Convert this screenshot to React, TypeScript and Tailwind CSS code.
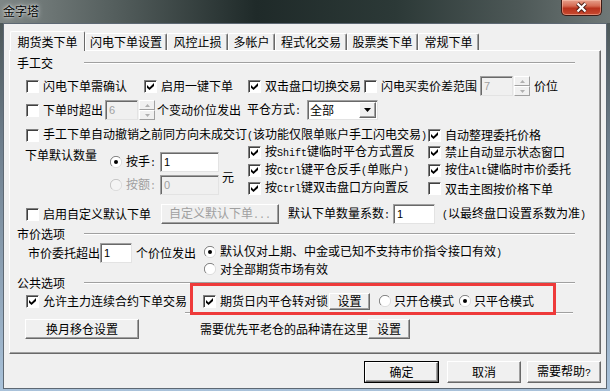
import React from 'react';

const mono = "font-['Liberation_Mono',monospace] text-[10px]";

// ASCII runs use a 6px-wide mono face, like the SimSun dialog font
function Txt({ t, className = '' }: { t: string; className?: string }) {
  const parts = t.split(/([\x20-\x7e]+)/).filter(Boolean);
  return (
    <span className={`whitespace-pre ${className}`}>
      {parts.map((p, i) =>
        /^[\x20-\x7e]+$/.test(p) ? (
          <span key={i} className={mono}>
            {p}
          </span>
        ) : (
          <span key={i}>{p}</span>
        )
      )}
    </span>
  );
}

function Check({ on = false }: { on?: boolean }) {
  return (
    <span className="relative inline-flex h-[13px] w-[13px] shrink-0 border border-b-white border-l-[#808080] border-r-white border-t-[#808080] bg-white shadow-[inset_1px_1px_0_#404040]">
      {on && (
        <svg className="absolute left-[2px] top-[2px]" width="7" height="7" viewBox="0 0 7 7">
          <path d="M0 2 L2.5 4.4 L7 0 L7 3 L2.5 7 L0 4.8 Z" fill="#000" />
        </svg>
      )}
    </span>
  );
}

function Radio({ on = false, dis = false }: { on?: boolean; dis?: boolean }) {
  return (
    <svg width="12" height="12" viewBox="0 0 12 12" className="shrink-0">
      <circle cx="6" cy="6" r="5.5" fill={dis ? '#f4f4f4' : '#fff'} />
      <path d="M10 2A5.6 5.6 0 0 0 2 10" fill="none" stroke={dis ? '#c4c4c4' : '#808080'} />
      <path d="M2 10A5.6 5.6 0 0 0 10 2" fill="none" stroke="#dcdcdc" />
      {on && <circle cx="6" cy="6" r="2" fill={dis ? '#a0a0a0' : '#000'} />}
    </svg>
  );
}

function Field({ className = '', v, dis = false }: { className?: string; v: string; dis?: boolean }) {
  return (
    <span
      className={`flex shrink-0 items-center border border-b-[#e3e3e3] border-l-[#a0a0a0] border-r-[#e3e3e3] border-t-[#a0a0a0] pl-[3px] font-['Liberation_Sans',sans-serif] text-[11px] shadow-[inset_1px_1px_0_#696969] ${
        dis ? 'bg-[#f0f0f0] text-[#a0a0a0]' : 'bg-white text-black'
      } ${className}`}
    >
      {v}
    </span>
  );
}

function Spin() {
  return (
    <span className="flex h-[20px] w-[16px] shrink-0 flex-col">
      <span className="flex h-[10px] items-center justify-center border border-b-[#a0a0a0] border-l-white border-r-[#a0a0a0] border-t-white bg-[#f0f0f0]">
        <svg width="5" height="3" viewBox="0 0 5 3">
          <path d="M2.5 0L5 3H0Z" fill="#b0b0b0" />
        </svg>
      </span>
      <span className="flex h-[10px] items-center justify-center border border-b-[#a0a0a0] border-l-white border-r-[#a0a0a0] border-t-white bg-[#f0f0f0]">
        <svg width="5" height="3" viewBox="0 0 5 3">
          <path d="M0 0H5L2.5 3Z" fill="#b0b0b0" />
        </svg>
      </span>
    </span>
  );
}

function Btn({
  className = '',
  children,
  dis = false,
}: {
  className?: string;
  children: React.ReactNode;
  dis?: boolean;
}) {
  return (
    <span
      className={`flex shrink-0 items-center justify-center border border-b-[#696969] border-l-white border-r-[#696969] border-t-white bg-[#f0f0f0] shadow-[inset_-1px_-1px_0_#a0a0a0] ${
        dis ? 'text-[#a0a0a0]' : ''
      } ${className}`}
    >
      {children}
    </span>
  );
}

function Group({ t }: { t: string }) {
  return (
    <div className="flex h-[16px] items-center pl-[7px]">
      <span className="w-[67px]">{t}</span>
      <span className="h-[2px] w-[491px] border-b border-t border-b-white border-t-[#a0a0a0]" />
    </div>
  );
}

function Opt({ on = false, t, className = '' }: { on?: boolean; t: string; className?: string }) {
  return (
    <span className={`flex shrink-0 items-center ${className}`}>
      <Check on={on} />
      <Txt t={t} className="ml-[4px]" />
    </span>
  );
}

const tabs = [
  { label: '闪电下单设置', w: 'w-[82px]' },
  { label: '风控止损', w: 'w-[61px]' },
  { label: '多帐户', w: 'w-[47px]' },
  { label: '程式化交易', w: 'w-[72px]' },
  { label: '股票类下单', w: 'w-[71px]' },
  { label: '常规下单', w: 'w-[61px]' },
];

function TitleBar() {
  return (
    <div className="flex h-[23px] bg-[linear-gradient(90deg,#7f8786_0%,#56605f_18%,#1f2a29_42%,#2c3937_65%,#4d5857_85%,#6f7877_100%)]">
      <span className="ml-[3px] mt-[4px] text-black [text-shadow:0_0_5px_rgba(255,255,255,0.9),0_0_2px_rgba(255,255,255,0.8)]">
        金字塔
      </span>
      <div className="ml-auto mr-[8px] flex h-[16px] w-[41px] items-center justify-center rounded-b-[5px] border border-t-0 border-[#3c1a14] bg-[linear-gradient(180deg,#e6a08c_0%,#d56a52_40%,#b8321c_55%,#c84a30_100%)] shadow-[inset_0_0_0_1px_rgba(255,210,190,0.45)]">
        <svg width="13" height="11" viewBox="0 0 13 11">
          <path d="M2.5 1.5L10.5 9.5M10.5 1.5L2.5 9.5" stroke="#4a1c14" strokeWidth="4" />
          <path d="M2.5 1.5L10.5 9.5M10.5 1.5L2.5 9.5" stroke="#fff" strokeWidth="2.2" />
        </svg>
      </div>
    </div>
  );
}

function Tabs() {
  return (
    <div className="relative z-10 mt-[7px] flex h-[20px] items-end pl-[6px]">
      <span className="flex h-[20px] w-[75px] items-center justify-center rounded-t-[2px] border-l border-r border-t border-l-white border-r-[#696969] border-t-white bg-[#f0f0f0] pt-[1px]">
        期货类下单
      </span>
      {tabs.map((t) => (
        <span
          key={t.label}
          className={`mb-[1px] flex h-[17px] items-center justify-center rounded-t-[2px] border-l border-r border-t border-l-white border-r-[#696969] border-t-white shadow-[inset_-1px_0_0_#a0a0a0] ${t.w}`}
        >
          {t.label}
        </span>
      ))}
    </div>
  );
}

function Panel() {
  return (
    <div className="relative -mt-[1px] ml-[5px] flex h-[304px] w-[592px] flex-col border border-b-[#696969] border-l-white border-r-[#696969] border-t-white shadow-[inset_-1px_-1px_0_#a0a0a0]">
      <div className="mt-[4px]">
        <Group t="手工交" />
      </div>

      <div className="mt-[5px] flex h-[20px] items-center pl-[16px]">
        <Opt t="闪电下单需确认" className="w-[118px]" />
        <Opt on t="启用一键下单" className="w-[104px]" />
        <Opt on t="双击盘口切换交易" className="w-[116px]" />
        <Opt t="闪电买卖价差范围" />
        <Field className="ml-[3px] h-[20px] w-[33px]" v="7" dis />
        <span className="ml-[1px]">
          <Spin />
        </span>
        <span className="ml-[4px]">价位</span>
      </div>

      <div className="mt-[4px] flex h-[20px] items-center pl-[16px]">
        <Opt t="下单时超出" />
        <Field className="ml-[2px] h-[20px] w-[33px]" v="6" dis />
        <span className="ml-[1px]">
          <Spin />
        </span>
        <span className="ml-[2px]">个变动价位发出</span>
        <Txt t="平仓方式:" className="ml-[6px]" />
        <span className="ml-[6px] flex h-[20px] w-[71px] items-center border border-b-[#e3e3e3] border-l-[#a0a0a0] border-r-[#e3e3e3] border-t-[#a0a0a0] bg-white pl-[2px] shadow-[inset_1px_1px_0_#696969]">
          <span className="flex-1">全部</span>
          <span className="mr-[1px] flex h-[16px] w-[17px] items-center justify-center border border-b-[#696969] border-l-white border-r-[#696969] border-t-white bg-[#f0f0f0] shadow-[inset_-1px_-1px_0_#a0a0a0]">
            <svg width="7" height="4" viewBox="0 0 7 4">
              <path d="M0 0H7L3.5 4Z" fill="#000" />
            </svg>
          </span>
        </span>
      </div>

      <div className="mt-[7px] flex h-[16px] items-center pl-[16px]">
        <Opt t="手工下单自动撤销之前同方向未成交订(该功能仅限单账户手工闪电交易)" />
        <span className="ml-[1px]">
          <Opt on t="自动整理委托价格" />
        </span>
      </div>

      <div className="flex h-[55px] pl-[15px]">
        <span className="w-[85px] pt-[5px]">下单默认数量</span>
        <div className="flex flex-col">
          <div className="mt-[9px] flex h-[20px] items-center">
            <Radio on />
            <Txt t="按手:" className="ml-[4px] w-[34px]" />
            <Field className="h-[20px] w-[59px]" v="1" />
          </div>
          <div className="mt-[3px] flex h-[20px] items-center">
            <Radio dis />
            <Txt t="按额:" className="ml-[4px] w-[34px] text-[#a0a0a0]" />
            <Field className="h-[20px] w-[59px]" v="0" dis />
          </div>
        </div>
        <span className="ml-[3px] pt-[27px]">元</span>
        <div className="ml-[14px] flex flex-col">
          <div className="flex h-[18px] items-center">
            <Opt on t="按Shift键临时平仓方式置反" className="w-[180px]" />
            <Opt on t="禁止自动显示状态窗口" />
          </div>
          <div className="flex h-[19px] items-center">
            <Opt on t="按Ctrl键平仓反手(单账户)" className="w-[180px]" />
            <Opt on t="按住Alt键临时市价委托" />
          </div>
          <div className="flex h-[17px] items-center">
            <Opt on t="按Ctrl键双击盘口方向置反" className="w-[180px]" />
            <Opt t="双击主图按价格下单" />
          </div>
        </div>
      </div>

      <div className="mt-[6px] flex h-[20px] items-center pl-[16px]">
        <Opt t="启用自定义默认下单" />
        <Btn dis className="ml-[10px] h-[20px] w-[118px]">
          <Txt t="自定义默认下单..." />
        </Btn>
        <Txt t="默认下单数量系数:" className="ml-[9px]" />
        <Field className="ml-[3px] h-[20px] w-[42px]" v="1" />
        <Txt t="(以最终盘口设置系数为准)" className="ml-[7px]" />
      </div>

      <div className="mt-[2px]">
        <Group t="市价选项" />
      </div>

      <div className="mt-[1px] flex h-[34px] items-start pl-[18px]">
        <div className="flex h-[20px] items-center">
          <span>市价委托超出</span>
          <Field className="h-[20px] w-[32px]" v="1" />
          <span className="ml-[4px]">个价位发出</span>
        </div>
        <div className="ml-[8px] flex flex-col">
          <div className="flex h-[18px] items-center">
            <Radio on />
            <Txt t="默认仅对上期、中金或已知不支持市价指令接口有效)" className="ml-[4px]" />
          </div>
          <div className="flex h-[16px] items-center">
            <Radio />
            <span className="ml-[4px]">对全部期货市场有效</span>
          </div>
        </div>
      </div>

      <div className="-mt-[2px]">
        <Group t="公共选项" />
      </div>

      <div className="mt-[1px] flex h-[18px] items-center pl-[16px]">
        <Opt on t="允许主力连续合约下单交易" className="w-[177px]" />
        <Opt on t="期货日内平仓转对锁" />
        <Btn className="ml-[1px] h-[17px] w-[41px]">设置</Btn>
        <span className="ml-[9px] flex items-center">
          <Radio />
          <span className="ml-[3px]">只开仓模式</span>
        </span>
        <span className="ml-[5px] flex items-center">
          <Radio on />
          <span className="ml-[3px]">只平仓模式</span>
        </span>
      </div>

      <span className="ml-[175px] mt-[2px] h-[2px] w-[388px] border-b border-t border-b-white border-t-[#a0a0a0]" />

      <div className="mt-[5px] flex h-[20px] items-center pl-[15px]">
        <Btn className="h-[20px] w-[114px]">换月移仓设置</Btn>
        <span className="ml-[61px]">需要优先平老仓的品种请在这里</span>
        <Btn className="h-[20px] w-[42px]">设置</Btn>
      </div>

      {/* red annotation frame */}
      <div className="pointer-events-none absolute left-[180px] top-[232px] h-[32px] w-[366px] border-[3px] border-[#ee3a3a]" />
    </div>
  );
}

function Footer() {
  return (
    <div className="mt-[7px] flex h-[22px] pl-[360px]">
      <span className="flex h-[22px] w-[75px] border border-black">
        <Btn className="h-full w-full">确定</Btn>
      </span>
      <Btn className="ml-[8px] h-[22px] w-[74px]">取消</Btn>
      <Btn className="ml-[6px] h-[22px] w-[74px]">
        <Txt t="需要帮助?" />
      </Btn>
    </div>
  );
}

export default function App() {
  return (
    <div className="relative h-[391px] w-[610px] overflow-hidden whitespace-nowrap bg-[linear-gradient(180deg,#47514f_0%,#6c7c8a_35%,#a9c2da_100%)] font-['Noto_Sans_CJK_SC',sans-serif] text-[12px] leading-[14px] text-black">
      <TitleBar />
      <div className="ml-[3px] flex h-[366px] w-[604px] flex-col border border-[#5d6873] bg-[#f0f0f0]">
        <Tabs />
        <Panel />
        <Footer />
      </div>
    </div>
  );
}
